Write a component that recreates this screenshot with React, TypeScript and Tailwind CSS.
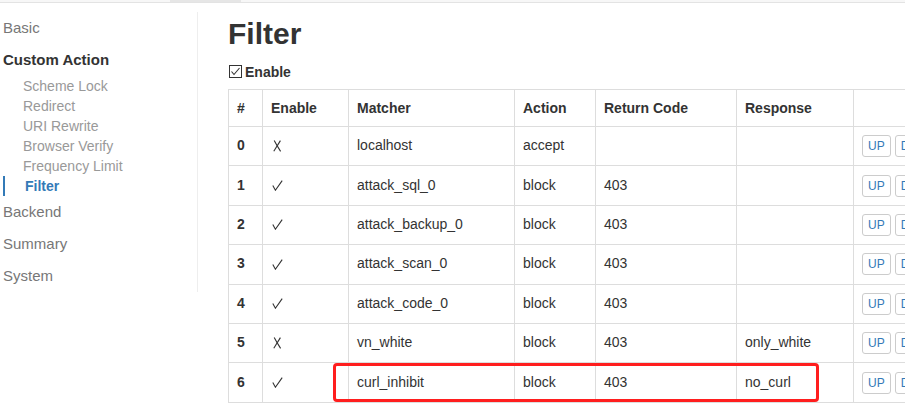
import React from 'react';

const rows = [
  { id: 0, on: false, matcher: 'localhost', action: 'accept', code: '', resp: '' },
  { id: 1, on: true, matcher: 'attack_sql_0', action: 'block', code: '403', resp: '' },
  { id: 2, on: true, matcher: 'attack_backup_0', action: 'block', code: '403', resp: '' },
  { id: 3, on: true, matcher: 'attack_scan_0', action: 'block', code: '403', resp: '' },
  { id: 4, on: true, matcher: 'attack_code_0', action: 'block', code: '403', resp: '' },
  { id: 5, on: false, matcher: 'vn_white', action: 'block', code: '403', resp: 'only_white' },
  { id: 6, on: true, matcher: 'curl_inhibit', action: 'block', code: '403', resp: 'no_curl' },
];

const subItems = ['Scheme Lock', 'Redirect', 'URI Rewrite', 'Browser Verify', 'Frequency Limit'];

const CheckMark = () => (
  <svg width="11" height="11" viewBox="0 0 11 11" className="ml-px">
    <path d="M0.8 5.6 L3.4 10.2 L10.2 0.6" fill="none" stroke="#333" strokeWidth="1.1" />
  </svg>
);

const CrossMark = () => (
  <svg width="9" height="12" viewBox="0 0 9 12" className="ml-[2px]">
    <path d="M1.2 0.6 Q3.5 5 7.6 11.4" fill="none" stroke="#333" strokeWidth="1.1" />
    <path d="M7.4 0.6 L0.8 11.2" fill="none" stroke="#333" strokeWidth="1.1" />
  </svg>
);

export default function App() {
  return (
    <div className="w-screen h-screen overflow-hidden bg-white text-[#333] font-['Liberation_Sans',Arial,sans-serif]">
      {/* top strip */}
      <div className="flex h-[3px] bg-[#f7f7f7] border-b border-[#e3e3e3]">
        <div className="w-[170px]" />
        <div className="w-[71px] bg-[#e6e6e6]" />
      </div>

      <div className="flex">
        {/* Sidebar */}
        <aside className="w-[198px] mt-[9px] h-[280px] border-r border-[#eeeeee] pl-[3px] shrink-0">
          <div className="h-[32px] flex items-center text-[15px] text-[#777]">Basic</div>
          <div className="h-[32px] flex items-center text-[15px] font-bold text-[#333]">Custom Action</div>
          {subItems.map((s) => (
            <div key={s} className="h-[20px] flex items-center pl-5 text-[14px] text-[#999]">{s}</div>
          ))}
          <div className="h-[20px] flex items-center border-l-2 border-[#337ab7] pl-5 text-[14px] font-bold text-[#337ab7]">Filter</div>
          <div className="h-[32px] flex items-center text-[15px] text-[#777]">Backend</div>
          <div className="h-[32px] flex items-center text-[15px] text-[#777]">Summary</div>
          <div className="h-[32px] flex items-center text-[15px] text-[#777]">System</div>
        </aside>

        {/* Main */}
        <main className="pl-[30px] flex-1 min-w-0">
          <h1 className="mt-[14px] text-[30px] leading-[33px] font-bold text-[#333]">Filter</h1>
          <div className="mt-[12px] h-[20px] flex items-center gap-[2px]">
            <svg width="14" height="14" viewBox="0 0 14 14" className="ml-px">
              <rect x="0.5" y="0.5" width="12" height="12" fill="white" stroke="#333" strokeWidth="1" />
              <path d="M2.5 6.5 L5 9.5 L10.5 3" fill="none" stroke="#333" strokeWidth="1.1" />
            </svg>
            <span className="text-[14px] font-bold">Enable</span>
          </div>

          <div className="relative mt-[7px]">
            <table className="table-fixed border-collapse text-[14px] w-[760px]">
              <colgroup>
                <col className="w-[34px]" />
                <col className="w-[86px]" />
                <col className="w-[166px]" />
                <col className="w-[81px]" />
                <col className="w-[141px]" />
                <col className="w-[117px]" />
                <col className="w-[135px]" />
              </colgroup>
              <thead>
                <tr className="h-[37px]">
                  {['#', 'Enable', 'Matcher', 'Action', 'Return Code', 'Response', ''].map((h, i) => (
                    <th key={i} className="border border-[#dddddd] px-2 text-left font-bold align-middle">{h}</th>
                  ))}
                </tr>
              </thead>
              <tbody>
                {rows.map((r) => (
                  <tr key={r.id} className="h-[39.4px]">
                    <td className="border border-[#dddddd] px-2 pb-px font-bold">{r.id}</td>
                    <td className="border border-[#dddddd] px-2">
                      <div className="flex items-center">{r.on ? <CheckMark /> : <CrossMark />}</div>
                    </td>
                    <td className="border border-[#dddddd] px-2 pb-px">{r.matcher}</td>
                    <td className="border border-[#dddddd] px-2 pb-px">{r.action}</td>
                    <td className="border border-[#dddddd] px-2 pb-px">{r.code}</td>
                    <td className="border border-[#dddddd] px-2 pb-px">{r.resp}</td>
                    <td className="border border-[#dddddd] px-2">
                      <div className="flex gap-1 whitespace-nowrap">
                        <button className="h-[22px] px-[5px] border border-[#cccccc] rounded-[3px] bg-white text-[12px] text-[#337ab7]">UP</button>
                        <button className="h-[22px] px-[5px] border border-[#cccccc] rounded-[3px] bg-white text-[12px] text-[#337ab7]">DOWN</button>
                        <button className="h-[22px] px-[5px] border border-[#cccccc] rounded-[3px] bg-white text-[12px] text-[#337ab7]">EDIT</button>
                      </div>
                    </td>
                  </tr>
                ))}
              </tbody>
            </table>
            {/* annotation box */}
            <div className="absolute left-[105px] top-[274px] w-[486px] h-[39px] border-[3px] border-[#ff1e1e] rounded-[4px] pointer-events-none" />
          </div>
        </main>
      </div>
    </div>
  );
}
